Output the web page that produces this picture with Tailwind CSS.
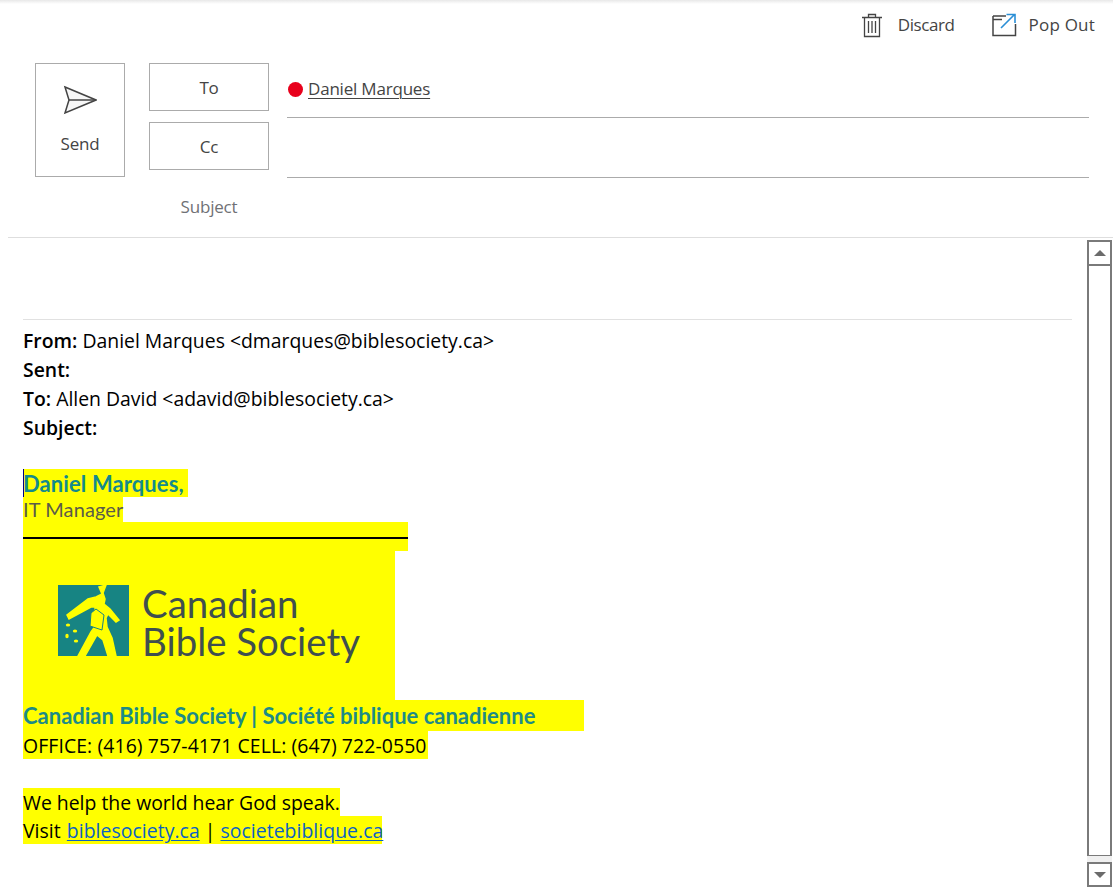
<!doctype html>
<html><head><meta charset="utf-8"><script src="https://cdn.jsdelivr.net/npm/@tailwindcss/browser@4"></script></head>
<body class="bg-white overflow-hidden">
<div class="w-[1113px] h-[887px] flex flex-col font-['Open_Sans',sans-serif] text-[#333] overflow-hidden">
  <header class="h-[50px] pt-[4px] bg-gradient-to-b from-[#e8e8e8] to-white to-[8%] flex justify-end items-start text-[17px] leading-[44px] text-[#444] pr-[18px]">
    <div class="flex items-center h-[42px] mr-[37px]">
      <svg class="w-[22px] h-[26px] mr-[15px]" viewBox="0 0 22 26" fill="none" stroke="#444" stroke-width="1.3"><path d="M1 5.500h20M7.500 5V2.500h7V5M3.500 5.500V24.500h15V5.500M7.500 9v12M11 9v12M14.500 9v12"/></svg>
      <span class="tracking-[-0.4px]">Discard</span>
    </div>
    <div class="flex items-center h-[42px]">
      <svg class="w-[26px] h-[26px] mr-[11px]" viewBox="0 0 26 26" fill="none"><path d="M1 4h13M1 7.500h9M1 4v19.500h22.500V12" stroke="#444" stroke-width="1.500"/><path d="M9 16L22 3M14.500 2.500h8.500v8.500" stroke="#2b8fd6" stroke-width="1.600"/></svg>
      <span class="tracking-[0.2px]">Pop Out</span>
    </div>
  </header>

  <section class="h-[187px] pl-[35px] pt-[13px] flex">
    <button class="w-[90px] h-[114px] border border-[#ababab] flex flex-col items-center text-[17px] tracking-[-0.2px] text-[#444]">
      <svg class="w-[34px] h-[30px] mt-[21px]" viewBox="0 0 34 30" fill="#f7f7f7" stroke="#444" stroke-width="1.500"><path d="M2 2L33 15L2 28L6 15Z"/><path d="M6 15H33" fill="none"/></svg>
      <span class="mt-[17px] leading-[24px]">Send</span>
    </button>
    <div class="ml-[24px] w-[120px] flex flex-col text-[17px] tracking-[-0.2px] text-[#444]">
      <button class="h-[48px] pt-[1px] border border-[#ababab]">To</button>
      <button class="h-[48px] pt-[1px] mt-[11px] border border-[#ababab]">Cc</button>
      <div class="text-center mt-[25px] leading-[24px] text-[#6f7175]">Subject</div>
    </div>
    <div class="ml-[18px] w-[802px]">
      <div class="h-[55px] border-b border-[#ababab] flex items-center pb-[2px] text-[17px] tracking-[-0.2px]">
        <span class="w-[15px] h-[15px] rounded-full bg-[#e8001c] ml-[1px] mr-[5px]"></span>
        <span class="underline underline-offset-[3px] decoration-1 text-[#444]">Daniel Marques</span>
      </div>
      <div class="h-[60px] border-b border-[#ababab]"></div>
    </div>
  </section>

  <div class="ml-[8px] border-t border-[#dedede] flex flex-1 min-h-0">
    <main class="w-[1079px] shrink-0 pl-[15px] text-[19.4px] text-black">
      <div class="mt-[81px] w-[1049px] border-t border-[#e1e1e1]"></div>
      <div class="mt-[6px] leading-[29px]">
        <p><b class="font-semibold">From:</b> Daniel Marques &lt;dmarques@biblesociety.ca&gt;</p>
        <p><b class="font-semibold">Sent:</b></p>
        <p><b class="font-semibold">To:</b> Allen David &lt;adavid@biblesociety.ca&gt;</p>
        <p><b class="font-semibold">Subject:</b></p>
      </div>
      <div class="relative mt-[27px] w-[165px] h-[28px] bg-[#ffff00] font-['Lato',sans-serif] font-bold text-[22px] leading-[29px] tracking-[0.1px] text-[#138a8c] whitespace-nowrap">Daniel Marques,<span class="absolute left-0 top-0 w-[1px] h-[28px] bg-[#000080]"></span></div>
      <div class="w-[100px] h-[25px] bg-[#ffff00] font-['Lato',sans-serif] text-[20px] leading-[25px] tracking-[0.1px] text-[#5b5b4a] whitespace-nowrap">IT Manager</div>
      <div class="w-[385px] h-[29px] bg-[#ffff00] pt-[15px]"><div class="h-[2px] bg-black"></div></div>
      <div class="w-[372px] h-[149px] bg-[#ffff00] pl-[35px] pt-[34px] flex">
        <svg class="w-[71px] h-[71px] shrink-0" viewBox="0 0 71 71">
          <rect width="71" height="71" fill="#178483"/>
          <path d="M41 2L48 0L45 8L47 14L46 19L52 24L61 35L58 37L50 29L48 33L49 42L54 53L58 71L50 71L45 55L39 50L27 71L20 71L33 47L38 40L37 22L33 22L11 34L9 30L30 14L38 12L44 9Z" fill="#ffff00" stroke="#ffff00" stroke-width="1.500"/>
          <path d="M33 28L38 24L46 30L44 45L32 41Z" fill="#ffff00" stroke="#178483" stroke-width="1"/>
          <ellipse cx="10" cy="40" rx="2.200" ry="1.600" fill="#ffff00"/>
          <ellipse cx="17" cy="46" rx="2.200" ry="1.600" fill="#ffff00"/>
          <ellipse cx="9" cy="51" rx="1.700" ry="2.200" fill="#ffff00"/>
          <ellipse cx="18" cy="56" rx="2.200" ry="1.600" fill="#ffff00"/>
        </svg>
        <div class="ml-[13px] text-[38.4px] leading-[38px] text-[#3f4f4f] font-['Lato',sans-serif] whitespace-nowrap -mt-[1px]">
          <div>Canadian</div><div>Bible Society</div>
        </div>
      </div>
      <div class="w-[561px] h-[31px] bg-[#ffff00] font-['Lato',sans-serif] font-bold text-[22px] leading-[31px] text-[#1d8b86] whitespace-nowrap">Canadian Bible Society | Société biblique canadienne</div>
      <div class="w-[405px] h-[28px] bg-[#ffff00] leading-[30px] whitespace-nowrap tracking-[0.1px]">OFFICE: (416) 757-4171 CELL: (647) 722-0550</div>
      <div class="mt-[29px] w-[317px] h-[28px] bg-[#ffff00] leading-[30px] whitespace-nowrap">We help the world hear God speak.</div>
      <div class="w-[359px] h-[28px] bg-[#ffff00] leading-[30px] whitespace-nowrap tracking-[0.05px]">Visit <a class="ml-[1px] text-[#0b62c4] underline underline-offset-2">biblesociety.ca</a><span class="mx-[5px]">|</span><a class="text-[#0b62c4] underline underline-offset-2">societebiblique.ca</a></div>
    </main>
    <aside class="w-[25px] pt-[2px] flex flex-col">
      <div class="h-[26px] border-2 border-[#7a7a7a] flex items-center justify-center"><div class="w-0 h-0 border-x-[6px] border-x-transparent border-b-[6px] border-b-[#6b6b6b]"></div></div>
      <div class="h-[593px] -mt-[2px] border-2 border-[#7a7a7a]"></div>
      <div class="h-[6px] bg-[#f0f0f0] -mt-[1px]"></div>
      <div class="h-[25px] border-2 border-[#7a7a7a] flex items-center justify-center"><div class="w-0 h-0 border-x-[6px] border-x-transparent border-t-[6px] border-t-[#6b6b6b]"></div></div>
    </aside>
  </div>
</div>
</body></html>
